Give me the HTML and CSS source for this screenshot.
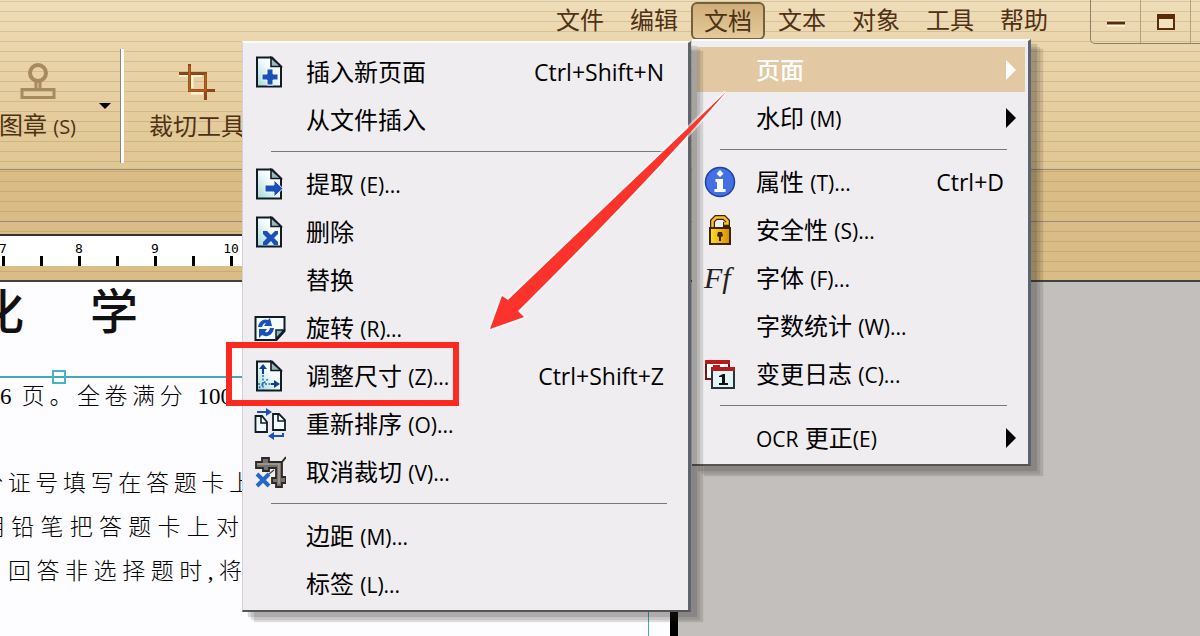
FILE: index.html
```html
<!DOCTYPE html>
<html lang="zh-CN">
<head>
    <meta charset="UTF-8">
    <meta name="viewport" content="width=device-width, initial-scale=1.0">
    <title>PDF 编辑器</title>
    <link rel="stylesheet" href="styles.css">
</head>
<body>
    <svg class="defs" width="0" height="0" aria-hidden="true">
        <linearGradient id="paper" x1="1" y1="0" x2="0" y2="1">
            <stop offset="0.4" stop-color="#fafdff"/>
            <stop offset="1" stop-color="#9fd8d8"/>
        </linearGradient>
        <linearGradient id="gold" x1="0" x2="1">
            <stop offset="0" stop-color="#ffe02a"/>
            <stop offset="1" stop-color="#d98a00"/>
        </linearGradient>
        <symbol id="page" viewBox="0 0 32 32">
            <path d="M3 1.5h15l9 9v20H3z" fill="url(#paper)" stroke="#101c24" stroke-width="2"/>
            <path d="M17 1.5v9h10z" fill="#9fb6c0" stroke="#101c24" stroke-width="1.6"/>
        </symbol>
    </svg>

    <header>
        <nav class="menubar">
            <button>文件</button>
            <button>编辑</button>
            <button class="open">文档</button>
            <button>文本</button>
            <button>对象</button>
            <button>工具</button>
            <button>帮助</button>
            <div class="window-controls">
                <button aria-label="最小化">
                    <svg width="20" height="20" viewBox="0 0 20 20"><path d="M1 11.500h18" stroke="#fff5dd" stroke-width="6"/><path d="M1 11h18" stroke="#5b2c0a" stroke-width="3"/></svg>
                </button>
                <button aria-label="最大化">
                    <svg width="20" height="20" viewBox="0 0 20 20"><path d="M2 3h16v14H2z" fill="#f3e2bf" stroke="#5b2c0a" stroke-width="2"/><path d="M1 2h18v5H1z" fill="#5b2c0a"/></svg>
                </button>
                <button aria-label="关闭"></button>
            </div>
        </nav>
        <div class="toolbar">
            <button class="tool stamp">
                <svg width="36" height="36" viewBox="0 0 36 36" fill="none" stroke="#a88a60" stroke-width="4">
                    <circle cx="18" cy="10" r="8"/>
                    <path d="M16 18v7M20 18v7" stroke-width="3"/>
                    <path d="M2 26.500h32v8H2z" stroke-width="3"/>
                </svg>
                <span class="label">图章 <small>(S)</small></span>
            </button>
            <button class="caret" aria-label="图章选项"><svg width="12" height="6" viewBox="0 0 12 6"><path d="M0 0h12L6 6z"/></svg></button>
            <div class="divider"></div>
            <button class="tool">
                <svg width="36" height="36" viewBox="0 0 36 36" fill="none" stroke-width="3">
                    <path d="M0 11.500h23M13 12v12M12 29h12" stroke="#fff3d6"/>
                    <path d="M0 9.500h26.500V36" stroke="#8c4716"/>
                    <path d="M10.500 0v26.500H36" stroke="#8c4716"/>
                    <path d="M10.500 2v24.500H26.500V10" stroke="#b5611f" stroke-width="2"/>
                </svg>
                <span class="label">裁切工具</span>
            </button>
        </div>
        <div class="tray"></div>
        <div class="ruler-tray">
            <div class="ruler"><span>7</span><span>8</span><span>9</span><span>10</span></div>
        </div>
    </header>

    <main>
        <article class="sheet">
            <h1><span>化</span><span>学</span></h1>
            <div class="frame">
                <i class="handle"></i>
                <p class="pages">6 页。全卷满分 100</p>
                <p class="l1">份证号填写在答题卡上</p>
                <p class="l2">用铅笔把答题卡上对</p>
                <p class="l3">回答非选择题时,将</p>
            </div>
        </article>
    </main>

    <!-- 文档 menu -->
    <div class="menu document-menu">
        <button class="item active"><span class="icon"></span><span class="name">页面</span><svg class="more" viewBox="0 0 12 20"><path d="M1 0l10 10L1 20z"/></svg></button>
        <button class="item"><span class="icon"></span><span class="name">水印 <small>(M)</small></span><svg class="more" viewBox="0 0 12 20"><path d="M1 0l10 10L1 20z"/></svg></button>
        <hr>
        <button class="item">
            <svg class="icon" viewBox="0 0 32 32">
                <circle cx="16" cy="16" r="14.500" fill="#4470e4" stroke="#1c3fa8" stroke-width="1.500"/>
                <path d="M16 4l3.500 3.500L16 11l-3.500-3.500zM11.500 13H19v10h2.500v3h-11v-3H13v-7h-1.500z" fill="#fff"/>
            </svg>
            <span class="name">属性 <small>(T)...</small></span><kbd>Ctrl+D</kbd>
        </button>
        <button class="item">
            <svg class="icon" viewBox="0 0 32 32">
                <path d="M8.500 14V7l3.500-3.500h8L23.500 7v3.500H19" fill="none" stroke="#3a2500" stroke-width="5"/>
                <path d="M8.500 14V7l3.500-3.500h8L23.500 7v2.500H20" fill="none" stroke="#ffc02a" stroke-width="2.500"/>
                <path d="M6 14h20v16H6z" fill="url(#gold)" stroke="#3a2500" stroke-width="2"/>
                <path d="M14 18h4l1 4-2 1v4h-2v-4l-2-1z" fill="#3a2500"/>
            </svg>
            <span class="name">安全性 <small>(S)...</small></span>
        </button>
        <button class="item"><span class="icon ff">Ff</span><span class="name">字体 <small>(F)...</small></span></button>
        <button class="item"><span class="icon"></span><span class="name">字数统计 <small>(W)...</small></span></button>
        <button class="item">
            <svg class="icon" viewBox="0 0 32 32">
                <path d="M2 3h23v18H2z" fill="#fff" stroke="#7c1414" stroke-width="2"/><path d="M1 2h25v4H1z" fill="#b51c1c"/>
                <path d="M8 10h22v20H8z" fill="#e2f4f5" stroke="#26333a" stroke-width="2"/><path d="M7 9h24v4H7z" fill="#b51c1c"/><path d="M9 7h7v3H9z" fill="#b51c1c"/>
                <path d="M15 18l4-2h2v9h3v2h-9v-2h3v-6h-3z" fill="#111"/>
            </svg>
            <span class="name">变更日志 <small>(C)...</small></span>
        </button>
        <hr>
        <button class="item"><span class="icon"></span><span class="name"><small>OCR</small> 更正<small>(E)</small></span><svg class="more" viewBox="0 0 12 20"><path d="M1 0l10 10L1 20z"/></svg></button>
    </div>

    <!-- 页面 submenu -->
    <div class="menu page-menu">
        <button class="item">
            <svg class="icon" viewBox="0 0 32 32"><use href="#page"/><path d="M13 13h6v5h5v6h-5v5h-6v-5H8v-6h5z" fill="#1b50b8" stroke="#eef7fc"/></svg>
            <span class="name">插入新页面</span><kbd>Ctrl+Shift+N</kbd>
        </button>
        <button class="item"><span class="icon"></span><span class="name">从文件插入</span></button>
        <hr>
        <button class="item">
            <svg class="icon" viewBox="0 0 32 32"><use href="#page"/><path d="M11 17h9v-5l9 8.500-9 8.500v-5h-9z" fill="#1b50b8" stroke="#eef7fc"/></svg>
            <span class="name">提取 <small>(E)...</small></span>
        </button>
        <button class="item">
            <svg class="icon" viewBox="0 0 32 32"><use href="#page"/><path d="M9 15h4l4 4 4-4h3v3l-4 4 4 4v3h-4l-3-4-4 4H9v-3l4-4-4-4z" fill="#1b50b8"/></svg>
            <span class="name">删除</span>
        </button>
        <button class="item"><span class="icon"></span><span class="name">替换</span></button>
        <button class="item">
            <svg class="icon" viewBox="0 0 32 32">
                <path d="M1.500 5h29v14l-8 9h-21z" fill="#f4fbff" stroke="#101c24" stroke-width="2"/>
                <path d="M30 18h-8v9z" fill="#86aebb" stroke="#101c24" stroke-width="1.500"/>
                <path d="M4 15c1-6 6-9 10-7l2-2 2 8h-8l2-3c-2 0-3 1-4 4z" fill="#1b50b8"/>
                <path d="M20 16c-1 7-7 10-12 7l-3 3v-9h8l-2 3c3 1 4-1 5-4z" fill="#1b50b8"/>
            </svg>
            <span class="name">旋转 <small>(R)...</small></span>
        </button>
        <button class="item">
            <svg class="icon" viewBox="0 0 32 32">
                <use href="#page"/>
                <path d="M9 14V8M17 24h5" stroke="#0d3f93" stroke-width="2"/>
                <path d="M5 9l4-5 4 5zM20 20l6 4-6 4z" fill="#0d3f93"/>
                <path d="M9 15v15M4 24h13M5 28l9-9" stroke="#2a6fb0" stroke-width="1.500" stroke-dasharray="2 1.500"/>
            </svg>
            <span class="name">调整尺寸 <small>(Z)...</small></span><kbd>Ctrl+Shift+Z</kbd>
        </button>
        <button class="item">
            <svg class="icon" viewBox="0 0 32 32">
                <path d="M1.500 8H8l5 6v10H1.500zM19 6h6l6 6v10H19z" fill="#f4fbff" stroke="#101c24" stroke-width="1.800"/>
                <path d="M7 8v7h6M24 6v7h7" fill="none" stroke="#101c24" stroke-width="1.600"/>
                <path d="M3 4h10M19 28h10v-3" fill="none" stroke="#1b50b8" stroke-width="2"/>
                <path d="M12 0l6 4-6 4zM20 24l-6 4 6 4z" fill="#1b50b8"/>
            </svg>
            <span class="name">重新排序 <small>(O)...</small></span>
        </button>
        <button class="item">
            <svg class="icon" viewBox="0 0 32 32">
                <path d="M28 6l4-5" stroke="#2b2826" stroke-width="2"/>
                <path d="M2 6h6V2h7v4h13v15h4v6h-4v4h-6v-4h-4v-5h4V12h-7v3H9v-3H2z" fill="#77706b" stroke="#2b2826" stroke-width="1.800"/>
                <path d="M3 8h22v20" fill="none" stroke="#aaa29c" stroke-width="1.500"/>
                <path d="M3 18l12 12M15 18L3 30" stroke="#2468c4" stroke-width="4"/>
                <path d="M15 18l5-4" stroke="#444" stroke-width="1.500"/>
            </svg>
            <span class="name">取消裁切 <small>(V)...</small></span>
        </button>
        <hr>
        <button class="item"><span class="icon"></span><span class="name">边距 <small>(M)...</small></span></button>
        <button class="item"><span class="icon"></span><span class="name">标签 <small>(L)...</small></span></button>
    </div>

    <!-- red markup -->
    <div class="mark-box"></div>
    <svg class="mark-arrow" width="240" height="240" viewBox="488 90 240 240">
        <path d="M726 92Q610 202 508 300L502 296 490 329 524 317 518 311Q650 180 726 92z" fill="#fb332c" stroke="#fff" stroke-width="4" stroke-opacity="0.500" paint-order="stroke"/>
    </svg>
</body>
</html>
```
FILE: styles.css
```css
* {
    box-sizing: border-box;
}
body {
    margin: 0;
    min-height: 100vh;
    display: flex;
    flex-direction: column;
    position: relative;
    overflow: hidden;
    font-family: "Open Sans", "Noto Sans CJK SC", sans-serif;
    font-size: 24px;
    color: #000;
    background: #c2bfbc;
}
button {
    font: inherit;
    color: inherit;
    background: none;
    border: none;
    padding: 0;
    cursor: pointer;
}
svg {
    display: block;
}
small {
    font-size: 21px;
}
.defs {
    position: absolute;
}

/* top bars */
header {
    color: #4f3216;
    background:
        repeating-linear-gradient(transparent 0 1px, rgba(130, 100, 50, 0.2) 1px 2px, transparent 2px 10px),
        linear-gradient(#efddba 0, #e9d3a8 60px, #e0c693 168px, #dabc86 169px, #dabc86 100%);
    border-bottom: 2px solid #3f4340;
}
.menubar {
    display: flex;
    justify-content: flex-end;
    height: 44px;
}
.menubar > button {
    width: 74px;
    height: 40px;
    line-height: 36px;
}
.menubar .open {
    height: 38px;
    margin-top: 2px;
    border: 2px solid #75603d;
    border-radius: 6px;
    line-height: 32px;
    background: linear-gradient(#cfae78, #e4ca9b);
}
.window-controls {
    display: flex;
    margin-left: 29px;
    margin-right: -42px;
    border: 1px solid #8d8067;
    border-top: none;
    border-radius: 0 0 0 5px;
}
.window-controls button {
    width: 50px;
    display: flex;
    align-items: center;
    justify-content: center;
    border-right: 1px solid #b3a17c;
}
.toolbar {
    display: flex;
    align-items: center;
    height: 125px;
    padding-bottom: 2px;
}
.tool {
    display: flex;
    flex-direction: column;
    align-items: center;
    gap: 8px;
    padding-bottom: 4px;
    white-space: nowrap;
}
.tool .label {
    line-height: 36px;
}
.stamp {
    width: 75px;
}
.stamp small {
    font-size: 20px;
}
.tool svg {
    overflow: visible;
}
.caret {
    margin-left: 24px;
}
.divider {
    width: 4px;
    height: 114px;
    margin: 0 25px 0 9px;
    background: #fff;
    border-left: 1px solid #8e8672;
}
.tray {
    height: 53px;
    border-top: 1px solid #8f8d7c;
    border-bottom: 1px solid #8f8d7c;
}
.ruler-tray {
    height: 58px;
    padding-top: 12px;
}
.ruler {
    width: 678px;
    height: 32px;
    display: flex;
    overflow: hidden;
    padding-top: 5px;
    border-top: 2px solid #333;
    background: linear-gradient(90deg, #000 3px, transparent 3px) 2px 100% / 38px 10px repeat-x, #fff;
}
.ruler span {
    flex: none;
    width: 76px;
    text-align: center;
    font: 13px/16px "DejaVu Sans Mono", monospace;
    color: #000;
}
.ruler span:first-child {
    margin-left: -35px;
}

/* document */
main {
    flex: 1;
    display: flex;
}
.sheet {
    width: 678px;
    background: #fdfcfe;
    border-right: 8px solid #000;
    display: flex;
    flex-direction: column;
    overflow: hidden;
}
h1 {
    display: flex;
    gap: 66px;
    margin: 0 0 36px -24px;
    font-size: 48px;
    font-weight: 500;
    line-height: 58px;
    color: #111;
}
.frame {
    flex: 1;
    width: 649px;
    position: relative;
    border: 1px solid #45a8ba;
    border-width: 2px 1px 0 0;
}
.handle {
    position: absolute;
    left: 52px;
    top: -8px;
    width: 14px;
    height: 14px;
    border: 2px solid #45b4c8;
}
.frame p {
    margin: 0;
    height: 44px;
    line-height: 44px;
    font-family: "Liberation Serif", "Noto Sans CJK SC", serif;
    font-weight: 300;
    font-size: 23px;
    color: #000;
    text-align-last: justify;
    white-space: nowrap;
}
.frame .pages {
    width: 232px;
    margin-bottom: 40px;
    line-height: 38px;
}
.frame .l1 {
    width: 272px;
    margin-left: -20px;
}
.frame .l2 {
    width: 257px;
    margin-left: -18px;
}
.frame .l3 {
    width: 234px;
    margin-left: 8px;
}

/* popup menus */
.menu {
    position: absolute;
    padding: 5px 0 2px;
    background: #efedf0;
    border-top: 2px solid #fafafc;
    border-right: 3px solid #5b6470;
    border-bottom: 2px solid #555;
    box-shadow: 6px 5px 1px rgba(40, 35, 30, 0.16), 9px 8px 1px rgba(40, 35, 30, 0.12), 12px 10px 1px rgba(40, 35, 30, 0.14);
}
.document-menu {
    left: 692px;
    top: 39px;
    width: 339px;
}
.page-menu {
    left: 242px;
    top: 41px;
    width: 449px;
    border-left: 1px solid #d3d2d6;
}
.item {
    display: flex;
    align-items: center;
    width: 100%;
    height: 48px;
    padding: 0 11px 0 12px;
    text-align: left;
    white-space: nowrap;
}
.page-menu .item {
    padding-left: 11px;
}
.icon {
    flex: none;
    width: 32px;
    height: 32px;
    margin-right: 20px;
}
.name {
    flex: 1;
    line-height: 44px;
}
.item kbd {
    font: 23px "Open Sans", sans-serif;
    margin-right: 13px;
}
.more {
    width: 12px;
    height: 20px;
}
.active {
    color: #fff;
    font-weight: 500;
    background: linear-gradient(#e2c9a3, #e2c9a3) 5px 1px / calc(100% - 8px) 45px no-repeat;
}
.active .more {
    fill: #fff;
}
.ff {
    font: italic 30px/32px "Liberation Serif", serif;
    color: #222;
}
.menu hr {
    height: 1px;
    margin: 7px 21px 8px 28px;
    border: none;
    background: #77777c;
}

/* markup */
.mark-box {
    position: absolute;
    left: 226px;
    top: 342px;
    width: 233px;
    height: 64px;
    border: 6px solid #fa2a20;
}
.mark-arrow {
    position: absolute;
    left: 488px;
    top: 90px;
}
```
